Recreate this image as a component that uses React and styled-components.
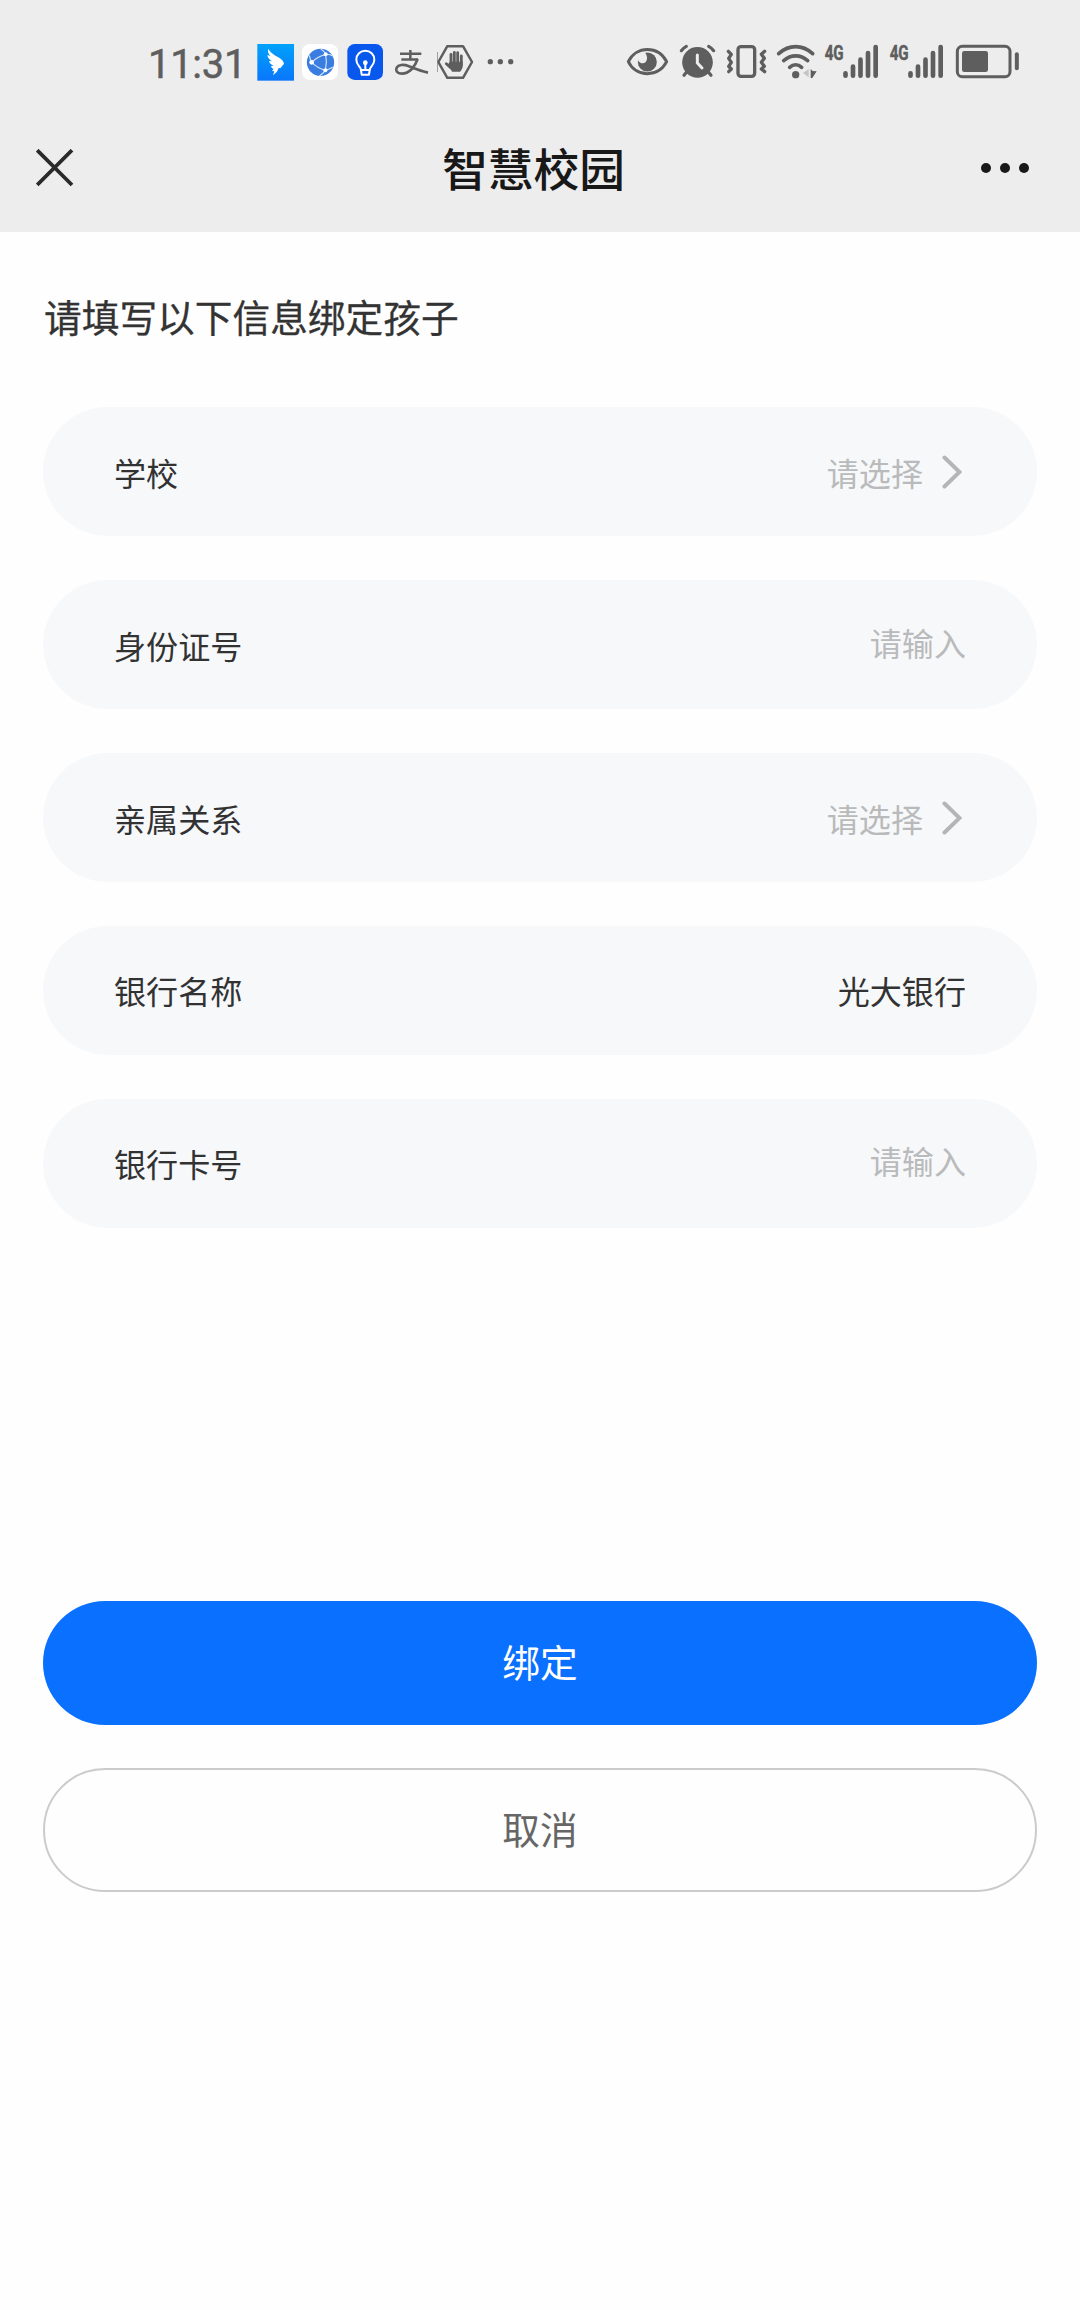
import styled, { createGlobalStyle } from 'styled-components';

const GlobalStyle = createGlobalStyle`
  * {
    box-sizing: border-box;
  }
  body {
    margin: 0;
    background: #fefefe;
    font-family: "Noto Sans CJK SC", "Noto Sans", sans-serif;
  }
`;

const Page = styled.div`
  width: 1080px;
  min-height: 2310px;
  background: #fefefe;
`;

const Header = styled.header`
  height: 232px;
  background: #ededed;
`;

const StatusBar = styled.div`
  display: flex;
  align-items: center;
  height: 104px;
  padding: 20px 60px 0 148px;
  color: #5e5e5e;
`;

const Time = styled.span`
  width: 109px;
  font-family: Roboto, sans-serif;
  font-size: 40px;
  line-height: 40px;
  letter-spacing: -0.3px;
  padding-top: 5px;
  -webkit-text-stroke: 0.5px #5e5e5e;
`;

const Icon = styled.svg`
  flex: none;
  width: ${(props) => props.$w}px;
  height: 40px;
  margin-left: ${(props) => props.$gap || 0}px;
  overflow: visible;
`;

const Spacer = styled.div`
  flex: 1;
`;

const NavBar = styled.div`
  display: grid;
  grid-template-columns: 1fr auto 1fr;
  align-items: center;
  height: 128px;
  padding: 0 49px 0 36px;
  color: #181818;
`;

const NavTitle = styled.h1`
  margin: 0;
  font-size: 45.7px;
  font-weight: 500;
  line-height: 60px;
  padding: 0 0 3px;
`;

const NavIcon = styled.svg`
  width: ${(props) => props.$w}px;
  height: 38px;
  margin-top: -1px;
  justify-self: ${(props) => props.$side};
`;

const Content = styled.main`
  padding: 0 43px;
`;

const Heading = styled.h2`
  margin: 0;
  padding: 57px 0 0 1px;
  height: 175.4px;
  font-size: 37.7px;
  font-weight: 400;
  line-height: 54px;
  color: #333;
  -webkit-text-stroke: 0.3px #333;
`;

const Form = styled.div`
  display: flex;
  flex-direction: column;
  gap: 44.1px;
`;

const Row = styled.div`
  display: flex;
  align-items: center;
  justify-content: space-between;
  height: 128.8px;
  padding: 0 71px;
  border-radius: 65px;
  background: #f7f8fa;
`;

const Label = styled.span`
  font-size: 32.1px;
  line-height: 48px;
  color: #323233;
`;

const Value = styled.span`
  display: flex;
  align-items: center;
  font-size: 32.1px;
  line-height: 48px;
  margin-top: ${(props) => (props.$input ? -6 : 0)}px;
  color: ${(props) => (props.$filled ? '#323233' : '#b9babb')};
`;

const Arrow = styled.svg`
  width: 20px;
  height: 34px;
  margin: 1px 4px 0 19px;
`;

const Actions = styled.div`
  display: flex;
  flex-direction: column;
  gap: 43px;
  margin-top: 373.2px;
`;

const Button = styled.button`
  height: 124px;
  padding: 0 0 3px;
  border: ${(props) => (props.$primary ? 'none' : '2px solid #cbcbcb')};
  border-radius: 62px;
  background: ${(props) => (props.$primary ? '#0a70ff' : '#fefefe')};
  color: ${(props) => (props.$primary ? '#fff' : '#666')};
  font-family: inherit;
  font-size: 37.7px;
  line-height: 54px;
`;

const DingTalk = () => (
  <Icon $w={37} viewBox="381 36 111 120">
    <defs>
      <linearGradient id="ding" x1="0" y1="0" x2="0" y2="1">
        <stop offset="0" stopColor="#00a2fb" />
        <stop offset="1" stopColor="#0a76fb" />
      </linearGradient>
    </defs>
    <rect x="382" y="42" width="110" height="110" fill="url(#ding)" />
    <path
      d="M415 56C421 69 434 75 445 82C455 88 461 94 462 101L451 115L446 114L441 125L429 136L433 124L426 123L431 117C426 115 424 112 423 108L431 107C423 104 418 99 417 93L426 94C418 89 413 83 412 75L421 78C415 71 412 64 415 56Z"
      fill="#fff"
    />
  </Icon>
);

const Globe = () => (
  <Icon $w={36} $gap={8} viewBox="516 36 108 120">
    <rect x="516" y="42" width="108" height="108" rx="24" fill="#fff" />
    <circle cx="571.500" cy="97" r="41" fill="#3a7de0" />
    <g fill="none" stroke="#d3e4fa" strokeWidth="3.500">
      <path d="M545 97Q562 80 587 73M545 97Q562 114 586 121M587 73Q592 97 586 121M587 73Q582 62 572 57M587 73Q600 72 608 78M545 97Q540 88 538 76M586 121Q598 118 608 112M586 121Q579 131 568 138" />
    </g>
    <g fill="#fff">
      <circle cx="545" cy="97" r="7" />
      <circle cx="587" cy="73" r="6" />
      <circle cx="586" cy="121" r="6" />
    </g>
  </Icon>
);

const Bulb = () => (
  <Icon $w={36} $gap={9} viewBox="51 36 108 120">
    <rect x="52" y="42" width="107" height="108" rx="22" fill="#0858ee" />
    <g fill="none" stroke="#fff" strokeWidth="6" strokeLinecap="round" strokeLinejoin="round">
      <path d="M93 120C93 110 79 106 79 89a27 27 0 0 1 54 0C133 106 119 110 119 120L117 134H95Z" />
      <path d="M93 120h12M119 120h-12M106 120V99" />
    </g>
    <circle cx="106" cy="98" r="7" fill="#fff" />
  </Icon>
);

const Alipay = () => (
  <Icon $w={34} $gap={12} viewBox="195 36 102 120">
    <g fill="none" stroke="currentColor">
      <path d="M210 71h64M241 60v29M214 88.500h50" strokeWidth="7.500" />
      <path d="M263 87C255 110 238 131 215 131c-14 0-19-9-15-18 5-9 20-11 35-5 20 8 38 16 59 20" strokeWidth="8" />
    </g>
  </Icon>
);

const HandStop = () => (
  <Icon $w={36} $gap={8} viewBox="321 36 108 120">
    <path
      d="M352 48.500h47L426 96l-27 47.500h-47L325 96z"
      fill="none"
      stroke="currentColor"
      strokeWidth="7.500"
      strokeLinejoin="round"
    />
    <g stroke="currentColor" strokeWidth="8.500" strokeLinecap="round">
      <path d="M363 73v32M373 67v38M383 68v37M394 78v27M349 101l14 13" />
    </g>
    <path d="M359 95h39v14c0 7-4 11-7 16h-25c-2-6-9-13-13-19z" fill="currentColor" />
    <path d="M322.500 66v60" stroke="#777" strokeWidth="2" />
  </Icon>
);

const More = () => (
  <Icon $w={27} $gap={14} viewBox="471 36 81 120">
    <g fill="currentColor">
      <circle cx="481" cy="95" r="8" />
      <circle cx="511" cy="95" r="8" />
      <circle cx="542" cy="95" r="8" />
    </g>
  </Icon>
);

const Eye = () => (
  <Icon $w={43} viewBox="48 36 129 120">
    <path
      d="M55 95C66 72 88 58.500 112 58.500s46 13.500 58 36.500c-12 23-34 36-58 36S66 118 55 95z"
      fill="none"
      stroke="currentColor"
      strokeWidth="9"
      strokeLinejoin="round"
    />
    <circle cx="112" cy="96" r="28.500" fill="currentColor" />
    <path d="M82 72L104 67C113 77 113 90 107 96C101 102 92 101 85 93Z" fill="#ededed" />
  </Icon>
);

const Alarm = () => (
  <Icon $w={37} $gap={10} viewBox="207 36 111 120">
    <circle cx="262.500" cy="97" r="46" fill="currentColor" />
    <g fill="none" stroke="currentColor" strokeWidth="9.500" strokeLinecap="round">
      <path d="M214 62q7-9 15-13M311 62q-7-9-15-13M233 122l-11 14M292 122l11 14" />
    </g>
    <path d="M262 75v24l14 15" fill="none" stroke="#ededed" strokeWidth="9" strokeLinecap="round" />
  </Icon>
);

const Vibrate = () => (
  <Icon $w={41} $gap={10} viewBox="348 36 123 120">
    <g fill="none" stroke="currentColor" strokeWidth="10" strokeLinecap="round" strokeLinejoin="round">
      <rect x="384" y="50" width="50" height="89" rx="9" />
      <path d="M355 64l9 9-8 12 8 12-8 12 8 8-8 8" />
      <path d="M464 64l-10 9 9 12-9 12 9 12-9 8 10 8" />
    </g>
  </Icon>
);

const Wifi = () => (
  <Icon $w={42} $gap={9} viewBox="498 36 126 120">
    <g fill="none" stroke="currentColor" strokeWidth="11" strokeLinecap="round">
      <path d="M506 71c31-28 71-28 102 0M521 92c22-19 50-19 72 0M539 112c11-10 25-10 36 0" />
    </g>
    <circle cx="557" cy="134" r="11" fill="currentColor" />
    <path d="M596 117v25l-17-13z" fill="#c4c4c4" />
    <path d="M602 117l6 6 12 1-13 20h-5z" fill="currentColor" />
  </Icon>
);

const Signal = ({ gap }) => (
  <Icon $w={55} $gap={gap} viewBox="42 36 165 120">
    <text
      x="44"
      y="89"
      fontFamily="Roboto, sans-serif"
      fontSize="61"
      fontWeight="700"
      textLength="57"
      lengthAdjust="spacingAndGlyphs"
      fill="currentColor"
      stroke="currentColor"
      strokeWidth="1.500"
    >
      4G
    </text>
    <g stroke="currentColor" strokeWidth="14" strokeLinecap="round">
      <path d="M106.500 130v7M129 110v27M151.500 89v48M174 69v68M197 51v86" />
    </g>
  </Icon>
);

const Battery = () => (
  <Icon $w={65} $gap={11} viewBox="435 36 195 120">
    <rect x="442" y="49" width="158" height="91" rx="15" fill="none" stroke="currentColor" strokeWidth="9" />
    <rect x="456" y="63" width="78" height="63" rx="7" fill="currentColor" />
    <path d="M620.500 73v42" stroke="currentColor" strokeWidth="12" strokeLinecap="round" />
  </Icon>
);

const fields = [
  { label: '学校', text: '请选择', type: 'select' },
  { label: '身份证号', text: '请输入', type: 'input' },
  { label: '亲属关系', text: '请选择', type: 'select' },
  { label: '银行名称', text: '光大银行', type: 'text' },
  { label: '银行卡号', text: '请输入', type: 'input' },
];

const Field = ({ label, text, type }) => (
  <Row>
    <Label>{label}</Label>
    <Value $input={type === 'input'} $filled={type === 'text'}>
      {text}
      {type === 'select' && (
        <Arrow viewBox="0 0 20 34" fill="none" stroke="#b4b5b6" strokeWidth="4" strokeLinecap="round">
          <path d="M2.500 2.500L17.500 17L2.500 31.500" />
        </Arrow>
      )}
    </Value>
  </Row>
);

export default function App() {
  return (
    <Page>
      <GlobalStyle />
      <Header>
        <StatusBar>
          <Time>11:31</Time>
          <DingTalk />
          <Globe />
          <Bulb />
          <Alipay />
          <HandStop />
          <More />
          <Spacer />
          <Eye />
          <Alarm />
          <Vibrate />
          <Wifi />
          <Signal gap={6} />
          <Signal gap={10} />
          <Battery />
        </StatusBar>
        <NavBar>
          <NavIcon $w={38} $side="start" viewBox="0 0 38 38" stroke="#2a2a2a" strokeWidth="3.800">
            <path d="M1.200 1.200L36 36M36 1.200L1.200 36" />
          </NavIcon>
          <NavTitle>智慧校园</NavTitle>
          <NavIcon $w={50} $side="end" viewBox="0 0 50 38" fill="#181818">
            <circle cx="5" cy="19" r="5" />
            <circle cx="24" cy="19" r="5" />
            <circle cx="43" cy="19" r="5" />
          </NavIcon>
        </NavBar>
      </Header>
      <Content>
        <Heading>请填写以下信息绑定孩子</Heading>
        <Form>
          {fields.map((field) => (
            <Field key={field.label} {...field} />
          ))}
        </Form>
        <Actions>
          <Button $primary>绑定</Button>
          <Button>取消</Button>
        </Actions>
      </Content>
    </Page>
  );
}
